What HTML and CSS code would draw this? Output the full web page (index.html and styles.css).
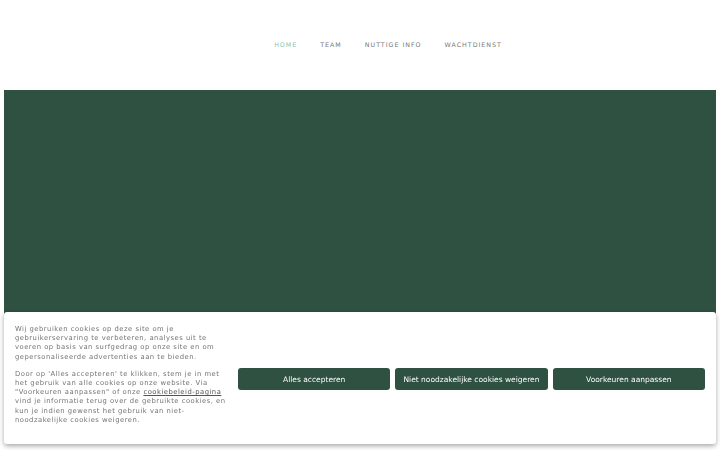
FILE: index.html
```html
<!DOCTYPE html>
<html lang="nl">
<head>
<meta charset="utf-8">
<title>Home</title>
<link rel="stylesheet" href="styles.css">
</head>
<body>
<div class="page">
  <header class="header">
    <nav class="nav">
      <a class="nav-link active" href="#">HOME</a>
      <a class="nav-link" href="#">TEAM</a>
      <a class="nav-link" href="#">NUTTIGE INFO</a>
      <a class="nav-link" href="#">WACHTDIENST</a>
    </nav>
  </header>
  <section class="hero"></section>
</div>
<div class="cookie">
  <div class="cookie-text">
    <p>Wij gebruiken cookies op deze site om je gebruikerservaring te verbeteren, analyses uit te voeren op basis van surfgedrag op onze site en om gepersonaliseerde advertenties aan te bieden.</p>
    <p>Door op 'Alles accepteren' te klikken, stem je in met het gebruik van alle cookies op onze website. Via "Voorkeuren aanpassen" of onze <a href="#">cookiebeleid-pagina</a> vind je informatie terug over de gebruikte cookies, en kun je indien gewenst het gebruik van niet-noodzakelijke cookies weigeren.</p>
  </div>
  <div class="cookie-actions">
    <button class="btn">Alles accepteren</button>
    <button class="btn">Niet noodzakelijke cookies weigeren</button>
    <button class="btn">Voorkeuren aanpassen</button>
  </div>
</div>
</body>
</html>
```
FILE: styles.css
```css
html, body {
  margin: 0;
  padding: 0;
  background: #fff;
  font-family: "DejaVu Sans", sans-serif;
}
.page {
  padding: 0 4px;
  height: 450px;
  overflow: hidden;
}
.header {
  height: 90px;
  display: flex;
  align-items: center;
  justify-content: center;
  padding-left: 56px;
  box-sizing: border-box;
}
.nav {
  display: flex;
  gap: 23px;
  margin-top: -1px;
}
.nav-link {
  font-size: 6.3px;
  letter-spacing: 1px;
  color: #777;
  text-decoration: none;
}
.nav-link.active {
  color: #8cc2b0;
}
.hero {
  background: #2e5141;
  height: 350px;
}
.cookie {
  position: fixed;
  left: 4px;
  right: 4px;
  bottom: 6px;
  height: 132px;
  background: #fff;
  border-radius: 3px;
  box-shadow: 0 2px 5px rgba(0,0,0,0.35);
  display: flex;
  align-items: flex-start;
  padding: 13px 11px 0;
  box-sizing: border-box;
}
.cookie-text {
  width: 219px;
  flex: none;
  font-size: 6.8px;
  line-height: 9.2px;
  letter-spacing: 0.5px;
  color: #747474;
}
.cookie-text p {
  margin: 0 0 8px;
}
.cookie-text p:last-child {
  margin-bottom: 0;
}
.cookie-text a {
  color: #555;
  text-decoration: underline;
}
.cookie-actions {
  display: flex;
  gap: 5px;
  margin-left: 4px;
  margin-top: 43px;
  flex: 1;
}
.btn {
  flex: 1;
  height: 22px;
  background: #2e5141;
  color: #fff;
  border: none;
  border-radius: 3px;
  font-family: "DejaVu Sans", sans-serif;
  font-size: 7.5px;
  padding: 0;
}
```
